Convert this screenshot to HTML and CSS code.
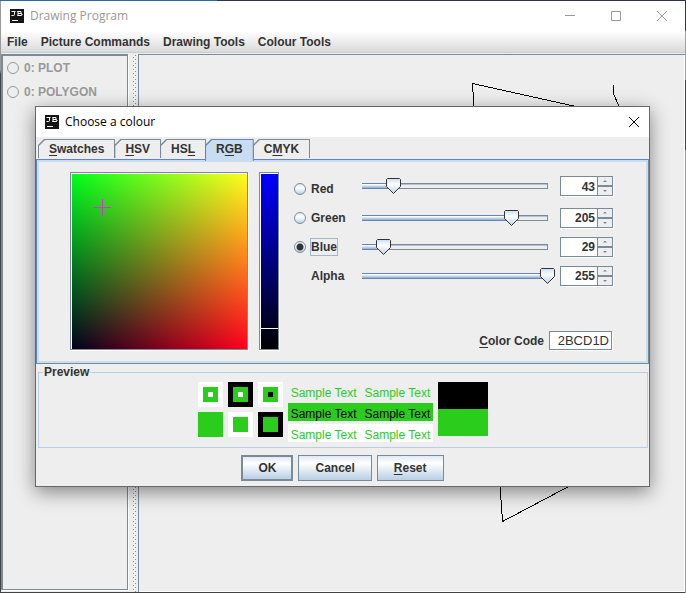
FILE: index.html
```html
<!DOCTYPE html>
<html lang="en">
<head>
<meta charset="utf-8">
<title>Drawing Program</title>
<link rel="stylesheet" href="styles.css">
</head>
<body>
<div class="window">
  <header class="titlebar">
    <svg class="logo" viewBox="0 0 14 14" aria-hidden="true"><rect width="14" height="14" fill="#151515"/><path d="M1.500 2.500h4M4.500 2v3.500q0 1-1 1H1.500M8 2v5M7.500 2.500h3.500v2H8M11 4.500l1 .5v1l-1 .5H7.500M2 11.500h6"/></svg>
    <h1 class="title">Drawing Program</h1>
    <div class="window-controls">
      <button aria-label="Minimise"><svg viewBox="0 0 10 10"><path d="M0 4.500h10"/></svg></button>
      <button aria-label="Maximise"><svg viewBox="0 0 10 10"><path d="M.5.5h9v9h-9z"/></svg></button>
      <button aria-label="Close"><svg viewBox="0 0 10 10"><path d="M0 0l10 10M10 0L0 10"/></svg></button>
    </div>
  </header>
  <nav class="menubar">
    <button>File</button><button>Picture Commands</button><button>Drawing Tools</button><button>Colour Tools</button>
  </nav>
  <main class="split">
    <section class="commands">
      <label><input type="radio" name="command" disabled>0: PLOT</label>
      <label><input type="radio" name="command" disabled>0: POLYGON</label>
    </section>
    <div class="divider"></div>
    <section class="canvas">
      <svg width="546" height="500" viewBox="0 0 546 500" aria-hidden="true"><path d="M441.500 52.500L333.500 28.500L335.500 60L363.500 466.500L440 426M474.500 30v9l9 20"/></svg>
    </section>
  </main>
</div>

<div class="dialog" role="dialog" aria-labelledby="dialog-title">
  <header class="dialog-titlebar">
    <svg class="logo" viewBox="0 0 14 14" aria-hidden="true"><rect width="14" height="14" fill="#151515"/><path d="M1.500 2.500h4M4.500 2v3.500q0 1-1 1H1.500M8 2v5M7.500 2.500h3.500v2H8M11 4.500l1 .5v1l-1 .5H7.500M2 11.500h6"/></svg>
    <h2 class="title" id="dialog-title">Choose a colour</h2>
    <button class="close" aria-label="Close"><svg viewBox="0 0 10 10"><path d="M0 0l10 10M10 0L0 10"/></svg></button>
  </header>
  <div class="tabs" role="tablist">
    <button role="tab" class="tab"><span><u>S</u>watches</span></button>
    <button role="tab" class="tab"><span><u>H</u>SV</span></button>
    <button role="tab" class="tab"><span>HS<u>L</u></span></button>
    <button role="tab" class="tab selected" aria-selected="true"><span>R<u>G</u>B</span></button>
    <button role="tab" class="tab"><span>C<u>M</u>YK</span></button>
  </div>
  <section class="panel" role="tabpanel">
    <div class="field"><svg class="cross" viewBox="0 0 17 17" aria-hidden="true"><path d="M8.500 0v17M0 8.500h17"/></svg></div>
    <div class="strip"><div class="strip-mark"></div></div>
    <div class="controls">
      <div class="channel first">
        <label class="name"><input type="radio" name="axis"><span>Red</span></label>
        <input class="slider" type="range" min="0" max="255" value="43" style="--v:43" aria-label="Red level">
        <div class="spinner"><input type="text" value="43" aria-label="Red"><button class="up" aria-label="Increase red"></button><button class="down" aria-label="Decrease red"></button></div>
      </div>
      <div class="channel">
        <label class="name"><input type="radio" name="axis"><span>Green</span></label>
        <input class="slider" type="range" min="0" max="255" value="205" style="--v:205" aria-label="Green level">
        <div class="spinner"><input type="text" value="205" aria-label="Green"><button class="up" aria-label="Increase green"></button><button class="down" aria-label="Decrease green"></button></div>
      </div>
      <div class="channel">
        <label class="name focused"><input type="radio" name="axis" checked><span>Blue</span></label>
        <input class="slider" type="range" min="0" max="255" value="29" style="--v:29" aria-label="Blue level">
        <div class="spinner"><input type="text" value="29" aria-label="Blue"><button class="up" aria-label="Increase blue"></button><button class="down" aria-label="Decrease blue"></button></div>
      </div>
      <div class="channel">
        <label class="name plain" for="alpha"><span>Alpha</span></label>
        <input class="slider" id="alpha" type="range" min="0" max="255" value="255" style="--v:255">
        <div class="spinner"><input type="text" value="255" aria-label="Alpha"><button class="up" aria-label="Increase alpha"></button><button class="down" aria-label="Decrease alpha"></button></div>
      </div>
      <div class="code"><label for="code"><u>C</u>olor Code</label><input id="code" type="text" value="2BCD1D"></div>
    </div>
  </section>
  <fieldset class="preview">
    <legend>Preview</legend>
    <div class="swatches">
      <i class="sw white ring"></i><i class="sw black ring"></i><i class="sw white ring dark"></i>
      <i class="sw full"></i><i class="sw white"></i><i class="sw black"></i>
    </div>
    <div class="samples">
      <p><span>Sample Text</span><span>Sample Text</span></p>
      <p class="on-green"><span>Sample Text</span><span>Sample Text</span></p>
      <p class="on-white"><span>Sample Text</span><span>Sample Text</span></p>
    </div>
    <div class="compare"></div>
  </fieldset>
  <footer class="actions">
    <button class="default">OK</button><button>Cancel</button><button><span><u>R</u>eset</span></button>
  </footer>
</div>
</body>
</html>
```
FILE: styles.css
```css
* { box-sizing: border-box; }
:root {
  --line: #7a8a99;
  --blue: #6382bf;
  --pale: #c8ddf2;
  --face: #eeeeee;
  --ink: #333333;
  --green: #2bcd1d;
}
html { height: 100%; }
body {
  margin: 0;
  min-height: 100%;
  padding: 1px;
  display: flex;
  position: relative;
  background:
    linear-gradient(90deg, #2b68ac 217px, #343447 217px) top / 100% 1px no-repeat,
    linear-gradient(#999 70px, #444 74px) left / 1px 100% no-repeat,
    linear-gradient(#343447 31px, #a0a0a0 31px 80px, #444 80px 150px, #999 150px) right / 1px 100% no-repeat,
    #444;
  font: bold 12px/16px "Liberation Sans", Arial, sans-serif;
  color: var(--ink);
}
button, input { font: inherit; color: inherit; margin: 0; }
button { padding: 0; border: 0; background: none; }
h1, h2, p { margin: 0; }
u { text-underline-offset: 2px; text-decoration-thickness: 1px; }

.window { flex: 1; display: flex; flex-direction: column; background: var(--face); }
.titlebar { display: flex; align-items: center; height: 30px; padding-left: 9px; background: #fff; }
.logo { width: 14px; height: 14px; color: #fff; }
.title { font: 12px/16px "Open Sans", "Noto Sans", sans-serif; margin-left: 6px; }
.titlebar .title { color: #999; }
.window-controls { margin-left: auto; display: flex; }
.window-controls button { width: 46px; height: 30px; display: grid; place-items: center; color: #999; }
svg path { fill: none; stroke: currentColor; }
.window-controls svg, .close svg { width: 10px; height: 10px; overflow: visible; }

.menubar {
  display: flex; align-items: center; gap: 13px; height: 22px; padding-left: 6px;
  background: linear-gradient(#fff, #dadada);
  border-bottom: 1px solid #ccc;
}
.split { flex: 1; display: flex; padding-top: 1px; }
.commands {
  width: 127px; display: flex; flex-direction: column; gap: 8px; padding: 4px;
  border: 1px solid var(--line); border-left-width: 2px; border-top-width: 2px;
  box-shadow: 1px 1px #fff; margin-bottom: 2px; color: #999;
}
.commands label { display: flex; align-items: center; gap: 5px; }
input[type="radio"] { appearance: none; width: 12px; height: 12px; border: 1px solid #999; border-radius: 50%; flex: none; }
.divider {
  width: 10px;
  background:
    linear-gradient(var(--line) 1px, transparent 1px) 5px 3px / 1px 4px repeat-y,
    linear-gradient(var(--line) 1px, transparent 1px) 7px 5px / 1px 4px repeat-y,
    linear-gradient(#fff 1px, transparent 1px) 6px 4px / 1px 2px repeat-y;
}
.canvas { flex: 1; min-width: 0; overflow: hidden; border: solid var(--line); border-width: 1px 0 0 1px; box-shadow: inset -1px -1px #fff; }
.canvas svg { display: block; color: #000; shape-rendering: crispEdges; }

.dialog {
  position: absolute; top: 106px; left: 35px; right: 36px;
  background: var(--face); border: 1px solid #686868;
  box-shadow: 0 5px 18px rgba(0, 0, 0, 0.45);
}
.dialog-titlebar { display: flex; align-items: center; height: 30px; padding-left: 9px; background: #fff; color: #000; }
.close { margin-left: auto; width: 31px; height: 30px; display: grid; place-items: center; color: #000; }

.tabs { display: flex; align-items: flex-end; padding: 2px 2px 0; position: relative; z-index: 1; }
.tab {
  display: flex; height: 19px; padding: 2px 11px 0; margin-left: -1px; position: relative; line-height: 16px;
  background: var(--line);
  clip-path: polygon(6px 0, 100% 0, 100% 100%, 0 100%, 0 6px);
}
.tab:first-child { margin-left: 0; }
.tab::before {
  content: ""; position: absolute; inset: 1px 1px 0; background: var(--face);
  clip-path: polygon(6px 0, 100% 0, 100% 100%, 0 100%, 0 6px);
}
.tab span { position: relative; }
.tab.selected { height: 22px; margin-bottom: -3px; background: var(--blue); }
.tab.selected::before { background: var(--pale); }

.panel {
  display: flex; align-items: flex-start; padding: 10px 33px 11px 31px;
  border: 2px solid var(--pale);
  margin: 2px 1px 1px;
  box-shadow: 0 0 0 1px var(--line), 0 -1px #fff, -1px 0 var(--blue), 0 -2px var(--blue);
  box-shadow: 0 -1px var(--blue), -1px 0 var(--blue), 0 0 0 1px var(--line);
}
.field, .strip { border: 1px solid var(--line); flex: none; box-shadow: 1px 1px #fff, inset 1px 1px #fff; padding: 1px 0 0 1px; background-clip: content-box; }
.field {
  width: 178px; height: 178px;
  background-image: linear-gradient(90deg, #00001d, #ff001d), linear-gradient(#00ff00, #000);
  background-blend-mode: screen;
}
.cross { display: block; width: 17px; height: 17px; margin: 25px 0 0 22px; color: #d432e2; shape-rendering: crispEdges; }
.strip { width: 20px; height: 178px; margin-left: 11px; background-image: linear-gradient(#00f, #000); display: flex; flex-direction: column; }
.strip-mark { height: 1px; background: #fff; margin-top: 154px; }

.controls { flex: 1; min-width: 0; margin-left: 15px; }
.channel { display: flex; align-items: center; height: 29px; }
.channel.first { height: 31px; align-items: flex-start; padding-top: 4px; }
.channel.first .name { padding-top: 4px; }
.channel.first .slider { margin-top: 2px; }
.name { display: flex; align-items: center; gap: 3px; width: 61px; }
.name span { border: 1px solid transparent; padding: 0 1px; }
.name.focused span { border-color: #9fb8d0; padding: 0; margin-left: 1px; }
.name.plain { padding-left: 15px; }
.channel input[type="radio"] { border-color: var(--line); background: linear-gradient(#dfe9f4, #fff 40%, #b8cfe5); }
.channel input[type="radio"]:checked { background: radial-gradient(circle, var(--ink) 3px, transparent 4px), linear-gradient(#dfe9f4, #fff 40%, #b8cfe5); }

.slider { appearance: none; background: none; flex: 1; min-width: 0; height: 16px; outline: 0; }
.slider::-webkit-slider-runnable-track {
  height: 16px;
  background:
    linear-gradient(var(--blue) 1px, #fff 1px 2px, #d9e6f3 2px 3px, #b8cfe5 3px 4px, #a3b8cc 4px 5px, var(--blue) 5px) 7px 5px / calc((100% - 15px) * var(--v) / 255) 6px no-repeat,
    linear-gradient(var(--line), var(--line)) calc(100% - 7px) 5px / 1px 6px no-repeat,
    linear-gradient(var(--line) 1px, #b4c2d0 1px 2px, var(--face) 2px 5px, var(--line) 5px) 7px 5px / calc(100% - 14px) 6px no-repeat;
}
.slider::-webkit-slider-thumb {
  appearance: none; width: 15px; height: 16px; border: 0;
  background: url("data:image/svg+xml,%3Csvg xmlns='http://www.w3.org/2000/svg' width='15' height='16'%3E%3Cdefs%3E%3ClinearGradient id='g' x2='0' y2='1'%3E%3Cstop stop-color='%23c8ddf2'/%3E%3Cstop offset='.4' stop-color='%23fff'/%3E%3Cstop offset='1' stop-color='%23b8cfe5'/%3E%3C/linearGradient%3E%3C/defs%3E%3Cpath d='M1.500.5h12l1 1v7l-7 7-7-7v-7z' fill='url(%23g)' stroke='%23333'/%3E%3C/svg%3E");
}
.spinner { display: grid; grid-template-columns: 37px 16px; grid-template-rows: 10px 10px; margin-left: 5px; box-shadow: 1px 1px #fff; background: var(--line); }
.spinner input { grid-row: 1 / 3; width: 37px; height: 20px; border: 1px solid var(--line); border-right: 0; border-radius: 0; background: #fff; text-align: right; padding: 1px 2px 0 0; }
.spinner button { border: 1px solid var(--line); background: var(--face); display: grid; place-items: center; }
.spinner button::before { content: ""; width: 4px; height: 2px; background: var(--line); clip-path: polygon(50% 0, 100% 100%, 0 100%); }
.spinner .down::before { transform: rotate(180deg); }
.code { display: flex; align-items: center; justify-content: flex-end; gap: 5px; margin-top: 41px; padding-right: 1px; }
.code input { width: 63px; height: 19px; border: 1px solid var(--line); background: #fff; font: 13px/16px "Liberation Sans", Arial, sans-serif; text-align: right; padding: 0 2px; box-shadow: 1px 1px #fff; }

.preview {
  display: flex; justify-content: center; align-items: flex-start; gap: 5px;
  margin: 1px 1px 0 2px; padding: 2px 0 5px; border: 1px solid #b8cfe5; min-width: 0;
}
.preview legend { padding: 0 1px; margin-left: 4px; }
.swatches { display: grid; grid-template-columns: repeat(3, 25px); grid-auto-rows: 25px; gap: 5px; }
.sw { background: var(--green); border: 5px solid var(--green); display: grid; place-items: center; }
.sw.white { border-color: #fff; }
.sw.black { border-color: #000; }
.ring::before { content: ""; width: 5px; height: 5px; background: #fff; }
.ring.dark::before { background: #000; }
.samples { display: grid; gap: 3px; font-weight: normal; }
.samples p { display: flex; gap: 8px; height: 18px; padding: 2px 3px 0; line-height: 19px; color: var(--green); }
.samples .on-green { background: var(--green); color: #000; }
.samples .on-white { background: #fff; }
.compare { width: 50px; height: 54px; background: linear-gradient(#000 50%, var(--green) 50%); }

.actions { display: flex; justify-content: center; gap: 5px; padding: 7px 0 5px; }
.actions button { height: 26px; padding: 0 16px; border: 1px solid var(--line); background: linear-gradient(#dfe9f4, #fff 30%, #b8cfe5); }
.actions .default { border-width: 2px; padding: 0 15px; }
```
